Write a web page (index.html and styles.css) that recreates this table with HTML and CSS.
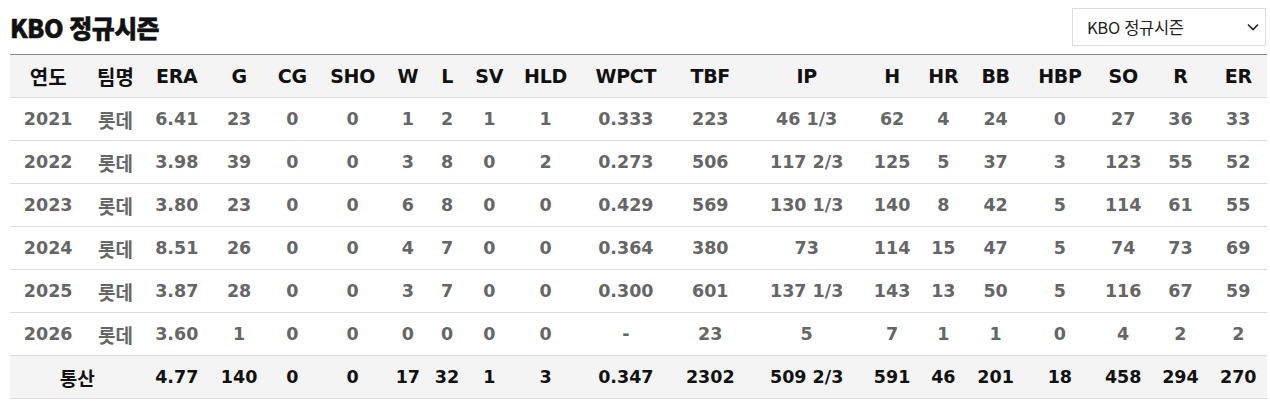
FILE: index.html
```html
<!DOCTYPE html>
<html lang="ko">
<head>
<meta charset="utf-8">
<link rel="stylesheet" href="styles.css">
</head>
<body>
<div class="wrap">
  <div class="top">
    <h2 class="title">KBO 정규시즌</h2>
    <div class="select">
      <span>KBO 정규시즌</span>
      <svg class="chev" width="12" height="8" viewBox="0 0 12 8"><path d="M1 1.5 L6 6.5 L11 1.5" fill="none" stroke="#222" stroke-width="1.6"/></svg>
    </div>
  </div>
  <table class="stats">
    <colgroup>
      <col><col><col><col><col><col><col><col><col><col><col><col><col><col><col><col><col><col><col><col>
    </colgroup>
    <thead>
      <tr><th class="ko">연도</th><th class="ko">팀명</th><th>ERA</th><th>G</th><th>CG</th><th>SHO</th><th>W</th><th>L</th><th>SV</th><th>HLD</th><th>WPCT</th><th>TBF</th><th>IP</th><th>H</th><th>HR</th><th>BB</th><th>HBP</th><th>SO</th><th>R</th><th>ER</th></tr>
    </thead>
    <tbody>
      <tr><td>2021</td><td class="ko">롯데</td><td>6.41</td><td>23</td><td>0</td><td>0</td><td>1</td><td>2</td><td>1</td><td>1</td><td>0.333</td><td>223</td><td>46 1/3</td><td>62</td><td>4</td><td>24</td><td>0</td><td>27</td><td>36</td><td>33</td></tr>
      <tr><td>2022</td><td class="ko">롯데</td><td>3.98</td><td>39</td><td>0</td><td>0</td><td>3</td><td>8</td><td>0</td><td>2</td><td>0.273</td><td>506</td><td>117 2/3</td><td>125</td><td>5</td><td>37</td><td>3</td><td>123</td><td>55</td><td>52</td></tr>
      <tr><td>2023</td><td class="ko">롯데</td><td>3.80</td><td>23</td><td>0</td><td>0</td><td>6</td><td>8</td><td>0</td><td>0</td><td>0.429</td><td>569</td><td>130 1/3</td><td>140</td><td>8</td><td>42</td><td>5</td><td>114</td><td>61</td><td>55</td></tr>
      <tr><td>2024</td><td class="ko">롯데</td><td>8.51</td><td>26</td><td>0</td><td>0</td><td>4</td><td>7</td><td>0</td><td>0</td><td>0.364</td><td>380</td><td>73</td><td>114</td><td>15</td><td>47</td><td>5</td><td>74</td><td>73</td><td>69</td></tr>
      <tr><td>2025</td><td class="ko">롯데</td><td>3.87</td><td>28</td><td>0</td><td>0</td><td>3</td><td>7</td><td>0</td><td>0</td><td>0.300</td><td>601</td><td>137 1/3</td><td>143</td><td>13</td><td>50</td><td>5</td><td>116</td><td>67</td><td>59</td></tr>
      <tr><td>2026</td><td class="ko">롯데</td><td>3.60</td><td>1</td><td>0</td><td>0</td><td>0</td><td>0</td><td>0</td><td>0</td><td>-</td><td>23</td><td>5</td><td>7</td><td>1</td><td>1</td><td>0</td><td>4</td><td>2</td><td>2</td></tr>
    </tbody>
    <tfoot>
      <tr><td colspan="2" class="ko">통산</td><td>4.77</td><td>140</td><td>0</td><td>0</td><td>17</td><td>32</td><td>1</td><td>3</td><td>0.347</td><td>2302</td><td>509 2/3</td><td>591</td><td>46</td><td>201</td><td>18</td><td>458</td><td>294</td><td>270</td></tr>
    </tfoot>
  </table>
</div>
</body>
</html>
```

FILE: styles.css
```css
html, body {
  margin: 0;
  padding: 0;
  background: #fff;
  overflow: hidden;
}
body {
  font-family: "Noto Sans CJK KR", "Noto Sans", sans-serif;
  color: #111;
}
.wrap {
  padding: 8px 0 0 10px;
  width: 1260px;
}
.top {
  display: flex;
  justify-content: space-between;
  align-items: center;
  height: 38px;
  padding-right: 4px;
  margin-bottom: 8px;
}
.title {
  margin: 0;
  font-size: 25px;
  font-weight: 900;
  letter-spacing: -0.6px;
  color: #111;
  -webkit-text-stroke: 0.5px #111;
}
.select {
  box-sizing: border-box;
  width: 194px;
  height: 38px;
  border: 1px solid #dcdcdc;
  display: flex;
  align-items: center;
  justify-content: space-between;
  padding: 0 6px 0 14px;
  font-size: 16.5px;
  color: #222;
  letter-spacing: -0.3px;
}
.chev { display: block; }
.stats {
  border-collapse: collapse;
  table-layout: fixed;
  width: 1257px;
  border-top: 1px solid #888;
  font-family: "DejaVu Sans", "Noto Sans CJK KR", sans-serif;
}
.stats col:nth-child(1) { width: 76px; }
.stats col:nth-child(2) { width: 58px; }
.stats col:nth-child(3) { width: 64px; }
.stats col:nth-child(4) { width: 60px; }
.stats col:nth-child(5) { width: 46px; }
.stats col:nth-child(6) { width: 74px; }
.stats col:nth-child(7) { width: 36px; }
.stats col:nth-child(8) { width: 42px; }
.stats col:nth-child(9) { width: 42px; }
.stats col:nth-child(10) { width: 70px; }
.stats col:nth-child(11) { width: 90px; }
.stats col:nth-child(12) { width: 78px; }
.stats col:nth-child(13) { width: 114px; }
.stats col:nth-child(14) { width: 56px; }
.stats col:nth-child(15) { width: 46px; }
.stats col:nth-child(16) { width: 58px; }
.stats col:nth-child(17) { width: 70px; }
.stats col:nth-child(18) { width: 56px; }
.stats col:nth-child(19) { width: 58px; }
.stats col:nth-child(20) { width: 57px; }
.stats th, .stats td {
  height: 42px;
  padding: 0;
  text-align: center;
  font-size: 17.5px;
  font-weight: 700;
  border-bottom: 1px solid #ddd;
  white-space: nowrap;
}
.stats th {
  background: #f4f4f4;
  color: #111;
  font-size: 19px;
  letter-spacing: -0.3px;
}
.stats tbody td {
  color: #666;
}
.stats tfoot td {
  background: #f4f4f4;
  color: #111;
}
.stats .ko {
  font-family: "Noto Sans CJK KR", sans-serif;
  font-size: 19px;
  letter-spacing: 0;
}
.stats th.ko {
  font-size: 20px;
}
```
